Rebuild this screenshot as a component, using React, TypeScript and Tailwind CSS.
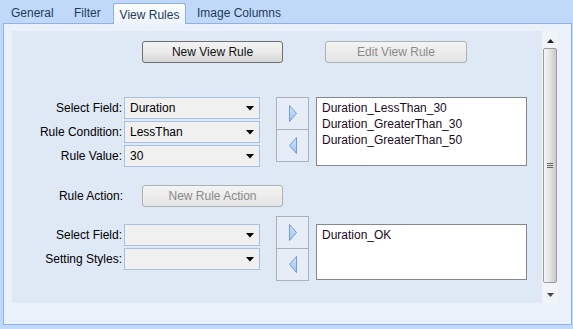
import React from "react";

const font = { fontFamily: '"Liberation Sans", Arial, sans-serif' };

function WinButton({ label, disabled, className }: { label: string; disabled?: boolean; className?: string }) {
  return (
    <div
      className={`flex h-[22px] items-center justify-center rounded-[3px] border text-[12px] ${
        disabled
          ? "border-[#adb2b5] bg-gradient-to-b from-[#f4f4f4] to-[#e4e4e4] text-[#8a8a8a]"
          : "border-[#707070] bg-gradient-to-b from-[#f3f3f3] via-[#ebebeb] to-[#d6d6d6] text-[#111]"
      } ${className ?? ""}`}
    >
      {label}
    </div>
  );
}

function Combo({ value }: { value: string }) {
  return (
    <div className="flex h-[22px] w-[136px] items-center justify-between border border-[#a9bfdf] bg-[#f0f0f0] pl-[5px] pr-[5px] text-[12px] text-black">
      <span>{value}</span>
      <svg width="8" height="5" viewBox="0 0 8 5">
        <path d="M0 0h8L4 4.5z" fill="#000" />
      </svg>
    </div>
  );
}

function FieldRow({ label, value }: { label: string; value: string }) {
  return (
    <div className="flex items-center">
      <span className="w-[112px] pr-[2px] text-right text-[12px] text-black">{label}</span>
      <Combo value={value} />
    </div>
  );
}

function Arrow({ dir }: { dir: "right" | "left" }) {
  return (
    <svg width="10" height="17" viewBox="0 0 10 17">
      <defs>
        <linearGradient id={`g-${dir}`} x1="0" y1="0" x2="0" y2="1">
          <stop offset="0" stopColor="#d4e5fa" />
          <stop offset="1" stopColor="#9fc2ee" />
        </linearGradient>
      </defs>
      <path
        d={dir === "right" ? "M1.5 0.5L8.5 8.5L1.5 16.5Z" : "M8.5 0.5L1.5 8.5L8.5 16.5Z"}
        fill={`url(#g-${dir})`}
        stroke="#6f9bd8"
        strokeWidth="1"
        strokeLinejoin="round"
      />
    </svg>
  );
}

function MoveButtons() {
  return (
    <div className="flex w-[33px] flex-col border border-[#a9b1bd] bg-[#e6edf6]">
      <div className="flex h-[32px] items-center justify-center border-b border-[#a9b1bd]">
        <Arrow dir="right" />
      </div>
      <div className="flex h-[31px] items-center justify-center">
        <Arrow dir="left" />
      </div>
    </div>
  );
}

function ListBox({ items, height }: { items: string[]; height: string }) {
  return (
    <div className={`w-[211px] border border-[#828790] bg-white px-[5px] pt-[2px] ${height}`}>
      {items.map((item) => (
        <div key={item} className="h-[16px] text-[12px] leading-[16px] text-[#1a0a24]">
          {item}
        </div>
      ))}
    </div>
  );
}

function ScrollBar() {
  return (
    <div className="flex w-[16px] flex-col items-center bg-[#f0f3f7] pt-[8px]">
      <svg width="7" height="4" viewBox="0 0 7 4" className="mb-[5px]">
        <path d="M0 4L3.5 0L7 4z" fill="#222" />
      </svg>
      <div className="flex w-[14px] flex-1 items-center justify-center rounded-[2px] border border-[#9c9c9c] bg-gradient-to-r from-[#f6f6f6] via-[#e4e4e4] to-[#c9c9c9]">
        <div className="flex flex-col gap-[1px]">
          <div className="h-px w-[6px] bg-[#666]" />
          <div className="h-px w-[6px] bg-[#666]" />
          <div className="h-px w-[6px] bg-[#666]" />
        </div>
      </div>
      <svg width="7" height="4" viewBox="0 0 7 4" className="mb-[6px] mt-[10px]">
        <path d="M0 0h7L3.5 4z" fill="#444" />
      </svg>
    </div>
  );
}

export default function App() {
  return (
    <div className="h-[329px] w-[573px] overflow-hidden bg-[#c1d9f8]" style={font}>
      <div className="flex h-[23px] items-end pl-[11px] text-[12px] text-[#1e395b]">
        <div className="flex h-[20px] w-[63px] items-center">General</div>
        <div className="flex h-[20px] w-[39px] items-center">Filter</div>
        <div className="relative z-10 -mb-px flex h-[21px] w-[73px] items-center justify-center rounded-t-[3px] border border-b-0 border-[#8db2e3] bg-gradient-to-b from-[#fbfdff] to-[#eef4fc] pt-[1px]">
          View Rules
        </div>
        <div className="ml-[11px] flex h-[20px] items-center">Image Columns</div>
      </div>
      <div className="ml-[3px] flex h-[302px] w-[569px] border border-[#8db2e3] bg-[#eaf1fb] pb-[21px] pl-[8px] pr-[13px] pt-[7px]">
        <div className="flex flex-1 bg-[#dfe8f5]">
          <div className="flex flex-1 flex-col pt-[10px]">
            <div className="flex gap-[42px] pl-[130px]">
              <WinButton label="New View Rule" className="h-[21px] w-[141px]" />
              <WinButton label="Edit View Rule" disabled className="h-[21px] w-[142px]" />
            </div>

            <div className="mt-[34px] flex">
              <div className="flex flex-col gap-[2px]">
                <FieldRow label="Select Field:" value="Duration" />
                <FieldRow label="Rule Condition:" value="LessThan" />
                <FieldRow label="Rule Value:" value="30" />
              </div>
              <div className="ml-[16px]">
                <MoveButtons />
              </div>
              <div className="ml-[7px]">
                <ListBox
                  items={["Duration_LessThan_30", "Duration_GreaterThan_30", "Duration_GreaterThan_50"]}
                  height="h-[69px]"
                />
              </div>
            </div>

            <div className="mt-[18px] flex items-center">
              <span className="w-[111px] text-right text-[12px] text-black">Rule Action:</span>
              <WinButton label="New Rule Action" disabled className="ml-[19px] w-[141px]" />
            </div>

            <div className="mt-[9px] flex items-start">
              <div className="mt-[8px] flex flex-col gap-[2px]">
                <FieldRow label="Select Field:" value="" />
                <FieldRow label="Setting Styles:" value="" />
              </div>
              <div className="ml-[16px]">
                <MoveButtons />
              </div>
              <div className="ml-[7px] mt-[8px]">
                <ListBox items={["Duration_OK"]} height="h-[56px]" />
              </div>
            </div>
          </div>
          <ScrollBar />
        </div>
      </div>
    </div>
  );
}
